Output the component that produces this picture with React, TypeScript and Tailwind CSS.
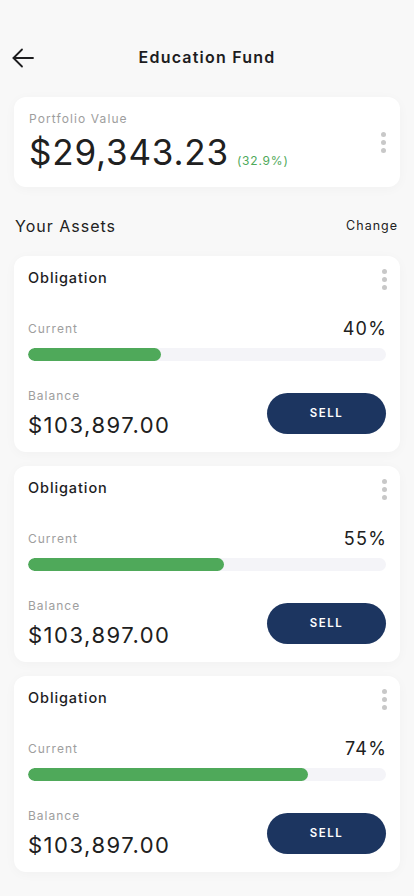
import React from "react";

const assets = [
  { name: "Obligation", pct: 40, bar: 37.2, balance: "$103,897.00" },
  { name: "Obligation", pct: 55, bar: 54.8, balance: "$103,897.00" },
  { name: "Obligation", pct: 74, bar: 78.2, balance: "$103,897.00" },
];

function Dots() {
  return (
    <div className="flex flex-col gap-[3px] items-center">
      <span className="w-[5px] h-[5px] rounded-full bg-[#c8c8c8]" />
      <span className="w-[5px] h-[5px] rounded-full bg-[#c8c8c8]" />
      <span className="w-[5px] h-[5px] rounded-full bg-[#c8c8c8]" />
    </div>
  );
}

export default function App() {
  return (
    <div
      className="w-[414px] min-h-[896px] bg-[#f8f8f8] text-[#1d1d1f] pb-6"
      style={{ fontFamily: "Inter, 'Noto Sans', sans-serif" }}
    >
      <div className="relative h-[97px] flex items-start">
        <div className="absolute left-[12px] top-[47px]">
          <svg width="22" height="22" viewBox="0 0 22 22" fill="none" stroke="#1d1d1f" strokeWidth="1.8" strokeLinecap="round" strokeLinejoin="round">
            <path d="M21 11H1.5" />
            <path d="M10 2.5L1.5 11L10 19.5" />
          </svg>
        </div>
        <div className="w-full text-center pt-[46px] text-[16px] font-semibold tracking-[1.2px] leading-[22px]">
          Education Fund
        </div>
      </div>

      <div className="mx-[14px] h-[90px] bg-white rounded-[12px] shadow-[0_2px_12px_rgba(0,0,0,0.03)] pl-[15px] pr-[13px] flex items-center justify-between">
        <div className="flex flex-col">
          <div className="text-[12px] text-[#9e9e9e] tracking-[1.1px] leading-[16px] mt-[-2px]">Portfolio Value</div>
          <div className="flex items-baseline gap-[8px] mt-[5px]">
            <span className="text-[35px] leading-[40px] tracking-[0.8px] text-[#202020]">$29,343.23</span>
            <span className="text-[12px] text-[#4fa95a] tracking-[0.8px]">(32.9%)</span>
          </div>
        </div>
        <div className="mt-[0px] mr-[1px]">
          <Dots />
        </div>
      </div>

      <div className="flex items-center justify-between px-[15px] mt-[28px] h-[22px]">
        <span className="text-[16px] tracking-[1px] text-[#222]">Your Assets</span>
        <span className="text-[12.5px] tracking-[1px] text-[#222] mr-[1px]">Change</span>
      </div>

      <div className="flex flex-col gap-[14px] mt-[19px] mx-[14px]">
        {assets.map((a, i) => (
          <div key={i} className="bg-white rounded-[12px] h-[196px] pl-[14px] pr-[14px] pt-[12px] shadow-[0_2px_12px_rgba(0,0,0,0.03)] flex flex-col">
            <div className="flex items-start justify-between">
              <span className="text-[14.5px] font-medium tracking-[0.9px] leading-[20px] mt-[0px]">{a.name}</span>
              <div className="mt-[1px] mr-[-1px]">
                <Dots />
              </div>
            </div>
            <div className="flex items-center justify-between mt-[28px] h-[22px]">
              <span className="text-[12px] text-[#9e9e9e] tracking-[1px] leading-[16px]">Current</span>
              <span className="text-[18px] tracking-[1.2px] leading-[22px] text-[#202020] mr-[-1px]">{a.pct}%</span>
            </div>
            <div className="mt-[8px] h-[13px] rounded-full bg-[#f4f4f8] overflow-hidden">
              <div className="h-full rounded-full bg-[#4fa95a]" style={{ width: `${a.bar}%` }} />
            </div>
            <div className="flex items-start justify-between mt-[27px]">
              <div className="flex flex-col">
                <span className="text-[12px] text-[#9e9e9e] tracking-[1px] leading-[16px]">Balance</span>
                <span className="text-[22px] tracking-[1.5px] leading-[28px] text-[#202020] mt-[7px]">{a.balance}</span>
              </div>
              <button className="mt-[5px] w-[119px] h-[41px] rounded-full bg-[#1c3560] text-white text-[11.5px] font-semibold tracking-[1.5px]">
                SELL
              </button>
            </div>
          </div>
        ))}
      </div>
    </div>
  );
}
